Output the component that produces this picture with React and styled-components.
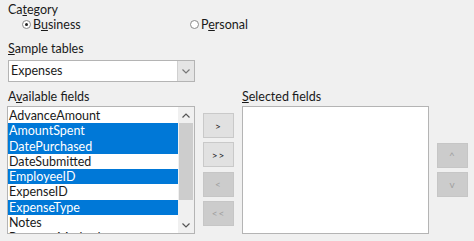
import styled, { createGlobalStyle } from 'styled-components';

const GlobalStyle = createGlobalStyle`
  html, body {
    margin: 0;
    padding: 0;
    background: #f0f0f0;
  }
  body {
    font-family: Lato, "Open Sans", sans-serif;
    font-size: 12.5px;
    color: #1a1a1a;
  }
`;

const Page = styled.div`
  width: 474px;
  height: 241px;
  box-sizing: border-box;
  padding: 2px 0 0 8px;
  display: flex;
  flex-direction: column;
  overflow: hidden;
`;

const Label = styled.div`
  height: 15px;
  line-height: 15px;
  margin-top: ${p => p.$top || 0}px;
  padding-left: ${p => p.$indent || 0}px;
  white-space: nowrap;
`;

const Key = styled.span`
  text-decoration: underline;
  text-underline-offset: 1px;
`;

const RadioRow = styled.div`
  display: flex;
  height: 15px;
  align-items: center;
  padding-left: 14px;
`;

const Radio = styled.label`
  display: flex;
  align-items: center;
  gap: 2px;
  width: ${p => p.$width || 'auto'};
`;

const Circle = styled.span`
  width: 7px;
  height: 7px;
  border-radius: 50%;
  border: 1px solid #8a8a8a;
  background: #fff;
  display: flex;
  align-items: center;
  justify-content: center;
  &::after {
    content: '';
    width: 3px;
    height: 3px;
    border-radius: 50%;
    background: ${p => (p.$checked ? '#222' : 'transparent')};
  }
`;

const Combo = styled.div`
  margin-top: 4px;
  width: 187px;
  height: 22px;
  box-sizing: border-box;
  border: 1px solid #b4b4b4;
  background: #fff;
  display: flex;
  align-items: stretch;
`;

const ComboText = styled.div`
  flex: 1;
  line-height: 20px;
  padding-left: 2px;
`;

const ComboButton = styled.div`
  width: 16px;
  background: #e5e5e5;
  border-left: 1px solid #d0d0d0;
  display: flex;
  align-items: center;
  justify-content: center;
  color: #777;
`;

const Fields = styled.div`
  display: grid;
  grid-template-columns: 188px 31px 187px 31px;
  column-gap: 8px;
  margin-left: -1px;
`;

const Column = styled.div`
  display: flex;
  flex-direction: column;
`;

const ListBox = styled.div`
  margin-top: 2px;
  height: 128px;
  box-sizing: border-box;
  border: 1px solid #b4b4b4;
  background: #fff;
  display: flex;
  overflow: hidden;
`;

const Rows = styled.div`
  flex: 1;
  padding-top: 1px;
  overflow: hidden;
`;

const Row = styled.div`
  height: 15.3px;
  line-height: 15.3px;
  padding-left: 1px;
  white-space: nowrap;
  background: ${p => (p.$selected ? '#0078d7' : 'transparent')};
  color: ${p => (p.$selected ? '#fff' : '#1a1a1a')};
`;

const ScrollBar = styled.div`
  width: 16px;
  background: #f0f0f0;
  display: flex;
  flex-direction: column;
`;

const ScrollArrow = styled.div`
  height: 16px;
  display: flex;
  align-items: center;
  justify-content: center;
  color: #555;
`;

const Thumb = styled.div`
  height: 77px;
  margin: 0 1px;
  background: #cdcdcd;
`;

const Track = styled.div`
  flex: 1;
`;

const ButtonStack = styled.div`
  display: flex;
  flex-direction: column;
  gap: 4.3px;
  padding-top: ${p => p.$top}px;
`;

const Button = styled.div`
  height: 25px;
  box-sizing: border-box;
  border: 1px solid ${p => (p.$disabled ? '#c6c6c6' : '#c9c9c9')};
  background: ${p => (p.$disabled ? '#cccccc' : '#e1e1e1')};
  color: ${p => (p.$disabled ? '#9f9f9f' : '#222')};
  display: flex;
  align-items: center;
  justify-content: center;
  font-size: 10px;
  letter-spacing: 1px;
`;

const Chevron = ({ up }) => (
  <svg width="8" height="5" viewBox="0 0 8 5">
    <path
      d={up ? 'M0.5 4.5 L4 1 L7.5 4.5' : 'M0.5 0.5 L4 4 L7.5 0.5'}
      fill="none"
      stroke="currentColor"
      strokeWidth="1.2"
    />
  </svg>
);

const fields = [
  ['AdvanceAmount', false],
  ['AmountSpent', true],
  ['DatePurchased', true],
  ['DateSubmitted', false],
  ['EmployeeID', true],
  ['ExpenseID', false],
  ['ExpenseType', true],
  ['Notes', false],
  ['PaymentMethod', false],
];

export default function App() {
  return (
    <Page>
      <GlobalStyle />
      <Label>
        Ca<Key>t</Key>egory
      </Label>
      <RadioRow>
        <Radio $width="168px">
          <Circle $checked />
          <span>
            B<Key>u</Key>siness
          </span>
        </Radio>
        <Radio>
          <Circle />
          <span>
            P<Key>e</Key>rsonal
          </span>
        </Radio>
      </RadioRow>
      <Label $top={9}>
        <Key>S</Key>ample tables
      </Label>
      <Combo>
        <ComboText>Expenses</ComboText>
        <ComboButton>
          <Chevron />
        </ComboButton>
      </Combo>
      <Fields>
        <Column>
          <Label $top={7} $indent={1}>
            A<Key>v</Key>ailable fields
          </Label>
          <ListBox>
            <Rows>
              {fields.map(([name, selected]) => (
                <Row key={name} $selected={selected}>
                  {name}
                </Row>
              ))}
            </Rows>
            <ScrollBar>
              <ScrollArrow>
                <Chevron up />
              </ScrollArrow>
              <Thumb />
              <Track />
              <ScrollArrow>
                <Chevron />
              </ScrollArrow>
            </ScrollBar>
          </ListBox>
        </Column>
        <ButtonStack $top={31}>
          <Button>&gt;</Button>
          <Button>&gt;&gt;</Button>
          <Button $disabled>&lt;</Button>
          <Button $disabled>&lt;&lt;</Button>
        </ButtonStack>
        <Column>
          <Label $top={7}>
            <Key>S</Key>elected fields
          </Label>
          <ListBox />
        </Column>
        <ButtonStack $top={60.5}>
          <Button $disabled>^</Button>
          <Button $disabled>v</Button>
        </ButtonStack>
      </Fields>
    </Page>
  );
}
